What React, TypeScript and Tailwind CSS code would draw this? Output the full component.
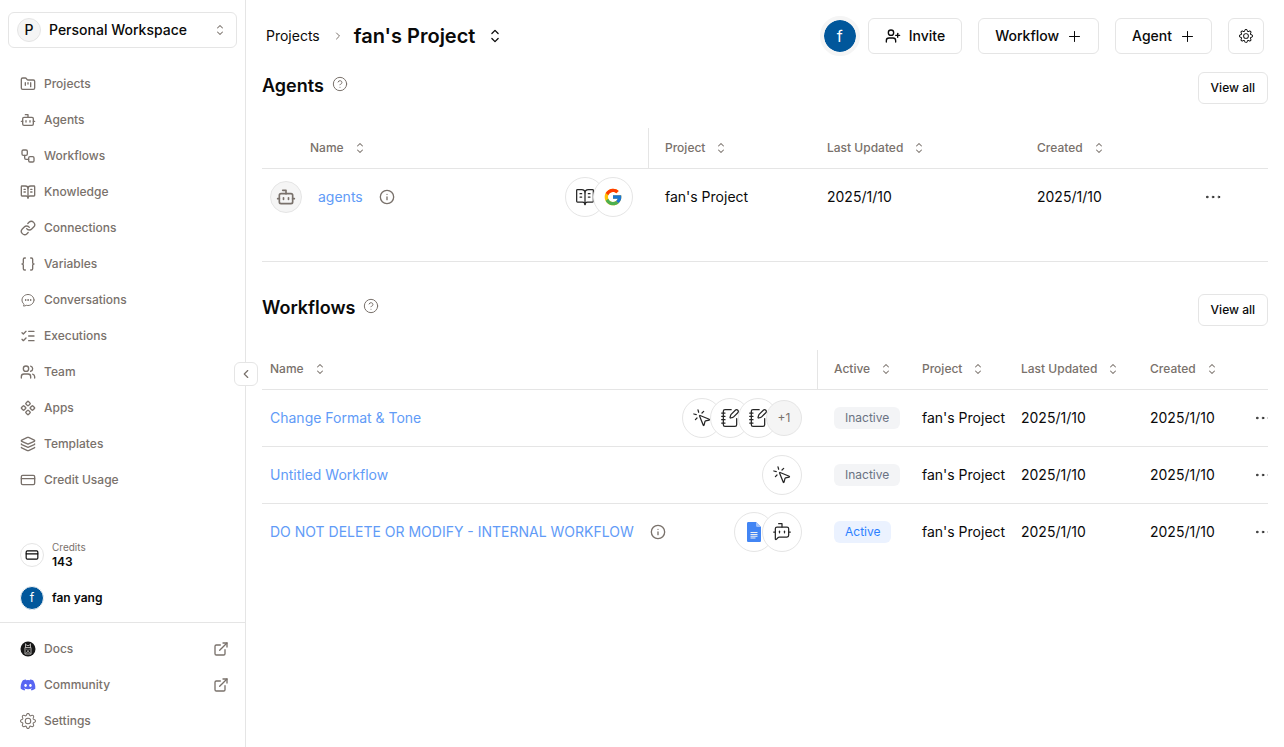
import type { ComponentType, ReactNode } from "react";
import {
  BookOpenText,
  Bot,
  BotMessageSquare,
  Braces,
  ChevronLeft,
  ChevronRight,
  CircleQuestionMark,
  Component,
  CreditCard,
  Ellipsis,
  ExternalLink,
  FolderKanban,
  Info,
  Layers,
  Link,
  ListChecks,
  MousePointerClick,
  NotebookPen,
  UserPlus,
  Users,
  Workflow,
} from "lucide-react";
import { BsGear } from "react-icons/bs";
import { FaDiscord } from "react-icons/fa";
import { FcGoogle } from "react-icons/fc";
import { HiChevronUpDown, HiOutlineChatBubbleOvalLeftEllipsis } from "react-icons/hi2";

type IconType = ComponentType<{ className?: string }>;

const navItems: { label: string; icon: IconType }[] = [
  { label: "Projects", icon: FolderKanban },
  { label: "Agents", icon: Bot },
  { label: "Workflows", icon: Workflow },
  { label: "Knowledge", icon: BookOpenText },
  { label: "Connections", icon: Link },
  { label: "Variables", icon: Braces },
  { label: "Conversations", icon: HiOutlineChatBubbleOvalLeftEllipsis },
  { label: "Executions", icon: ListChecks },
  { label: "Team", icon: Users },
  { label: "Apps", icon: Component },
  { label: "Templates", icon: Layers },
  { label: "Credit Usage", icon: CreditCard },
];

const footerItems: { label: string; icon: IconType; external?: boolean }[] = [
  { label: "Docs", icon: DocsLogo, external: true },
  { label: "Community", icon: DiscordLogo, external: true },
  { label: "Settings", icon: BsGear },
];

const workflows: {
  name: string;
  info?: boolean;
  apps: IconType[];
  extra?: number;
  active: boolean;
}[] = [
  { name: "Change Format & Tone", apps: [ClickIcon, NoteIcon, NoteIcon], extra: 1, active: false },
  { name: "Untitled Workflow", apps: [ClickIcon], active: false },
  {
    name: "DO NOT DELETE OR MODIFY - INTERNAL WORKFLOW",
    info: true,
    apps: [GoogleDocsLogo, ChatBotIcon],
    active: true,
  },
];

function DocsLogo({ className }: { className?: string }) {
  return (
    <svg viewBox="0 0 16 16" className={className} fill="none">
      <circle cx="8" cy="8" r="7.5" fill="#171717" />
      <path
        d="M5.5 2.500v3.700M10.500 2.500v3.700M5.500 4h1.500l1 1 1-1h1.500M5 6.500h6v6.500H5zM8 9v1.500M6.400 8.200h1M8.600 8.200h1M6.300 11.700 8 10.500l1.700 1.200"
        stroke="#d6d3d1"
        strokeWidth="0.8"
      />
    </svg>
  );
}

function DiscordLogo({ className }: { className?: string }) {
  return <FaDiscord className={`${className} text-[#5865f2]`} />;
}

function GoogleDocsLogo() {
  return (
    <svg viewBox="0 0 14 20" className="h-5 w-3.5">
      <path d="M1.3 0H9l5 5v13.700c0 .7-.6 1.300-1.300 1.300H1.300C.6 20 0 19.400 0 18.700V1.300C0 .6.6 0 1.300 0z" fill="#4285f4" />
      <path d="M9 0l5 5H10.200C9.500 5 9 4.500 9 3.800z" fill="#a1c2fa" />
      <path d="M3.500 10h7v1h-7zM3.500 11.900h7v1h-7zM3.500 13.800h7v1h-7zM3.500 15.600h5v1h-5z" fill="#f1f1f1" />
    </svg>
  );
}

function PlusIcon() {
  return (
    <svg viewBox="0 0 15 15" className="size-[15px]" fill="none" stroke="currentColor" strokeLinecap="round">
      <path d="M7.500 2.500v10M2.500 7.500h10" />
    </svg>
  );
}

function BookIcon() {
  return <BookOpenText className="size-5 text-neutral-800" strokeWidth={1.5} />;
}

function ClickIcon() {
  return <MousePointerClick className="size-5 text-neutral-800" strokeWidth={1.5} />;
}

function NoteIcon() {
  return <NotebookPen className="size-5 text-neutral-800" strokeWidth={1.5} />;
}

function ChatBotIcon() {
  return <BotMessageSquare className="size-5 text-neutral-800" strokeWidth={1.5} />;
}

function GoogleIcon() {
  return <FcGoogle className="size-5" />;
}

function AppStack({ apps, extra }: { apps: IconType[]; extra?: number }) {
  return (
    <div className="flex shrink-0 items-center -space-x-3">
      {apps.map((App, i) => (
        <span
          key={i}
          className="flex size-10 items-center justify-center rounded-full border border-neutral-200 bg-white"
        >
          <App />
        </span>
      ))}
      {extra && (
        <span className="flex size-9 items-center justify-center rounded-full border border-neutral-200 bg-neutral-100 text-xs text-stone-500">
          +{extra}
        </span>
      )}
    </div>
  );
}

function SortHeader({ children }: { children: ReactNode }) {
  return (
    <button className="flex items-center gap-2 text-xs font-medium whitespace-nowrap text-stone-500">
      {children}
      <HiChevronUpDown className="size-4" />
    </button>
  );
}

function SectionTitle({ children }: { children: ReactNode }) {
  return (
    <div className="flex items-start justify-between">
      <div className="flex gap-2">
        <h2 className="text-lg font-semibold">{children}</h2>
        <button aria-label={`About ${children}`} className="mt-1 h-4">
          <CircleQuestionMark className="size-4 text-stone-500" strokeWidth={1.5} />
        </button>
      </div>
      <button className="h-8 rounded-md border border-neutral-200 px-3 text-xs font-medium">View all</button>
    </div>
  );
}

function MoreButton() {
  return (
    <button aria-label="More" className="block">
      <Ellipsis className="size-5" strokeWidth={1} />
    </button>
  );
}

function Sidebar() {
  return (
    <aside className="relative flex w-[246px] shrink-0 flex-col border-r border-neutral-200">
      <div className="px-2 pt-3">
        <button className="flex h-9 w-full items-center gap-2 rounded-md border border-neutral-200 px-2 text-sm font-medium">
          <span className="flex size-6 items-center justify-center rounded-full border border-neutral-200 bg-neutral-100">
            P
          </span>
          Personal Workspace
          <HiChevronUpDown className="ml-auto size-4 text-stone-500" />
        </button>
      </div>

      <nav className="mt-[18px] flex flex-col px-2">
        {navItems.map(({ label, icon: Icon }) => (
          <a
            key={label}
            href="#"
            className="flex h-9 items-center gap-2 px-3 text-xs font-medium text-stone-500"
          >
            <Icon className="size-4" />
            {label}
          </a>
        ))}
      </nav>

      <div className="mt-auto flex flex-col gap-4 px-5 pb-3">
        <div className="flex items-center gap-2">
          <span className="flex size-6 items-center justify-center rounded-full border border-neutral-200">
            <CreditCard className="size-3.5" />
          </span>
          <div>
            <div className="text-[10px] leading-[14px] text-stone-500">Credits</div>
            <div className="text-xs font-semibold">143</div>
          </div>
        </div>
        <div className="flex items-center gap-2 text-xs font-semibold">
          <span className="flex size-6 items-center justify-center rounded-full border border-neutral-100 bg-[#01579b] text-xs font-normal text-white">
            f
          </span>
          fan yang
        </div>
      </div>

      <div className="border-t border-neutral-200 px-2 py-2">
        {footerItems.map(({ label, icon: Icon, external }) => (
          <a
            key={label}
            href="#"
            className="flex h-9 items-center gap-2 pr-2 pl-3 text-xs font-medium text-stone-500"
          >
            <Icon className="size-4" />
            {label}
            {external && <ExternalLink className="ml-auto size-4" />}
          </a>
        ))}
      </div>

      <button
        aria-label="Collapse sidebar"
        className="absolute top-1/2 right-[-13px] flex size-6 -translate-y-1/2 items-center justify-center rounded-md border border-neutral-200 bg-white"
      >
        <ChevronLeft className="size-3.5 text-stone-500" />
      </button>
    </aside>
  );
}

function Header() {
  return (
    <header className="flex items-center justify-between px-1">
      <div className="flex items-center">
        <a href="#" className="text-sm">
          Projects
        </a>
        <ChevronRight className="mr-2.5 ml-3 size-3 text-stone-500" />
        <h1 className="text-xl font-semibold">fan's Project</h1>
        <button aria-label="Switch project" className="ml-2.5">
          <HiChevronUpDown className="size-5" />
        </button>
      </div>
      <div className="flex items-center gap-4">
        <div className="flex items-center gap-2">
          <span className="flex size-10 items-center justify-center rounded-full border-4 border-neutral-100 bg-[#01579b] bg-clip-padding text-base text-white">
            f
          </span>
          <button className="flex h-9 items-center gap-2 rounded-md border border-neutral-200 px-4 text-sm font-medium">
            <UserPlus className="size-4" />
            Invite
          </button>
        </div>
        <button className="flex h-9 items-center gap-2 rounded-md border border-neutral-200 px-4 text-sm font-medium">
          Workflow
          <PlusIcon />
        </button>
        <button className="flex h-9 items-center gap-2 rounded-md border border-neutral-200 px-4 text-sm font-medium">
          Agent
          <PlusIcon />
        </button>
        <button
          aria-label="Project settings"
          className="flex size-9 items-center justify-center rounded-md border border-neutral-200"
        >
          <BsGear className="size-3.5" />
        </button>
      </div>
    </header>
  );
}

function AgentsTable() {
  return (
    <table className="mt-6 w-full table-fixed text-left text-sm">
      <thead>
        <tr className="border-b border-neutral-200">
          <th className="w-[387px] p-0">
            <div className="flex h-10 items-center border-r border-neutral-200 pl-12">
              <SortHeader>Name</SortHeader>
            </div>
          </th>
          <th className="w-[162px] pl-4">
            <SortHeader>Project</SortHeader>
          </th>
          <th className="w-[210px] pl-4">
            <SortHeader>Last Updated</SortHeader>
          </th>
          <th className="pl-4">
            <SortHeader>Created</SortHeader>
          </th>
          <th className="w-[79px]" />
        </tr>
      </thead>
      <tbody>
        <tr className="h-14">
          <td className="pr-4 pl-2">
            <div className="flex items-center">
              <span className="flex size-8 items-center justify-center rounded-full border border-neutral-200 bg-neutral-100 text-stone-500">
                <Bot className="size-5" />
              </span>
              <a href="#" className="ml-4 text-[#619bf7]">
                agents
              </a>
              <Info className="ml-4 size-4 text-stone-500" />
              <div className="ml-auto">
                <AppStack apps={[BookIcon, GoogleIcon]} />
              </div>
            </div>
          </td>
          <td className="pl-4">fan's Project</td>
          <td className="pl-4">2025/1/10</td>
          <td className="pl-4">2025/1/10</td>
          <td className="pl-3.5">
            <MoreButton />
          </td>
        </tr>
      </tbody>
    </table>
  );
}

function WorkflowsTable() {
  return (
    <div className="mt-6 overflow-hidden">
      <table className="w-full table-fixed text-left text-sm">
        <thead>
          <tr className="border-b border-neutral-200">
            <th className="p-0">
              <div className="flex h-[39px] items-center border-r border-neutral-200 pl-2">
                <SortHeader>Name</SortHeader>
              </div>
            </th>
            <th className="w-[88px] pl-4">
              <SortHeader>Active</SortHeader>
            </th>
            <th className="w-[99px] pl-4">
              <SortHeader>Project</SortHeader>
            </th>
            <th className="w-[129px] pl-4">
              <SortHeader>Last Updated</SortHeader>
            </th>
            <th className="w-[105px] pl-4">
              <SortHeader>Created</SortHeader>
            </th>
            <th className="w-[29px]" />
          </tr>
        </thead>
        <tbody>
          {workflows.map((flow) => (
            <tr key={flow.name} className="h-[57px] border-b border-neutral-200 last:border-b-0">
              <td className="pr-4 pl-2">
                <div className="flex items-center">
                  <a href="#" className="whitespace-nowrap text-[#619bf7]">
                    {flow.name}
                  </a>
                  {flow.info && <Info className="ml-4 size-4 shrink-0 text-stone-500" />}
                  <div className="ml-auto">
                    <AppStack apps={flow.apps} extra={flow.extra} />
                  </div>
                </div>
              </td>
              <td className="pl-4">
                <div
                  className={
                    flow.active
                      ? "w-fit rounded-md bg-[#ebf2ff] px-[11px] py-[3px] text-xs text-blue-500"
                      : "w-fit rounded-md bg-gray-100 px-[11px] py-[3px] text-xs text-gray-500"
                  }
                >
                  {flow.active ? "Active" : "Inactive"}
                </div>
              </td>
              <td className="pl-4 whitespace-nowrap">fan's Project</td>
              <td className="pl-4">2025/1/10</td>
              <td className="pl-4">2025/1/10</td>
              <td className="pl-3.5">
                <MoreButton />
              </td>
            </tr>
          ))}
        </tbody>
      </table>
    </div>
  );
}

export default function App() {
  return (
    <div className="flex min-h-screen bg-white font-[Inter,sans-serif] text-neutral-950">
      <Sidebar />
      <main className="min-w-0 flex-1 px-4 pt-4">
        <Header />
        <section className="mt-4 border-b border-neutral-200 pb-9">
          <SectionTitle>Agents</SectionTitle>
          <AgentsTable />
        </section>
        <section className="mt-8">
          <SectionTitle>Workflows</SectionTitle>
          <WorkflowsTable />
        </section>
      </main>
    </div>
  );
}
